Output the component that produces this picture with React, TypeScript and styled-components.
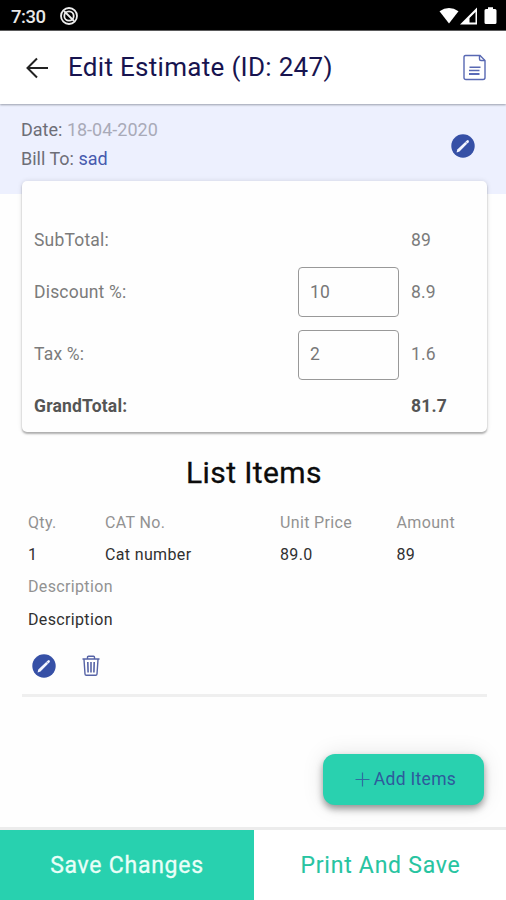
import React from "react";
import styled, { createGlobalStyle } from "styled-components";

const GlobalStyle = createGlobalStyle`
  * { box-sizing: border-box; }
  body { margin: 0; background: #fefefe; font-family: Roboto, "Liberation Sans", sans-serif; }
  button, input { font: inherit; }
`;

const Screen = styled.div`
  width: 506px;
  height: 900px;
  display: flex;
  flex-direction: column;
  overflow: hidden;
  background: #fefefe;
`;

const StatusBar = styled.div`
  height: 31px;
  flex: none;
  display: flex;
  align-items: center;
  background: #000;
  border-bottom: 1px solid #555;
  color: #e8e8e8;
  padding: 2px 8px 0 11px;
`;

const Clock = styled.span`
  width: 48px;
  padding-top: 1px;
  font-size: 18.5px;
  font-weight: 500;
  letter-spacing: -0.5px;
`;

const StatusIcons = styled.div`
  margin-left: auto;
  display: flex;
  svg { display: block; }
`;

const Header = styled.header`
  height: 73px;
  flex: none;
  display: flex;
  align-items: center;
  padding: 0 19px 0 24px;
  background: #fff;
  box-shadow: 0 1px 2px #9a9fac;
  z-index: 1;
  svg { display: block; }
`;

const Title = styled.h1`
  margin: -1px auto 0 17px;
  color: #17144f;
  font-size: 26px;
  font-weight: 400;
  line-height: 30px;
  letter-spacing: 0.3px;
`;

const Summary = styled.section`
  height: 90px;
  flex: none;
  display: flex;
  justify-content: space-between;
  background: #edf0fe;
  padding: 12px 31px 0 21px;
`;

const SummaryLine = styled.div<{ $tone?: string }>`
  height: 28.5px;
  line-height: 28.5px;
  font-size: 18px;
  color: #6d6e77;
  white-space: nowrap;
  span { color: ${(p) => p.$tone}; }
`;

const IconButton = styled.button<{ $top?: number }>`
  display: block;
  width: 24px;
  height: 24px;
  margin-top: ${(p) => p.$top ?? 0}px;
  border: 0;
  padding: 0;
  background: none;
  svg { display: block; }
`;

const TotalsCard = styled.section`
  position: relative;
  height: 251px;
  flex: none;
  margin: -13px 19px 0 22px;
  padding: 34px 12px 0;
  border-radius: 5px;
  background: #fefefe;
  box-shadow: 0 2px 2px rgba(0, 0, 0, 0.28), 0 0 5px rgba(0, 0, 0, 0.12);
`;

const TotalRow = styled.div<{ $height: number; $bold?: boolean }>`
  height: ${(p) => p.$height}px;
  display: grid;
  grid-template-columns: 264px 113px 1fr;
  align-items: center;
  color: ${(p) => (p.$bold ? "#555" : "#7b7b7b")};
  font-size: 17.5px;
  font-weight: ${(p) => (p.$bold ? 700 : 400)};
  letter-spacing: 0.2px;
  > span { margin-top: -1px; }
`;

const PercentInput = styled.input`
  width: 101px;
  height: 50px;
  border: 1.5px solid #999;
  border-radius: 4px;
  background: transparent;
  padding: 0 11px 1px;
  color: #777;
  letter-spacing: 0.2px;
  outline: none;
`;

const ListHeading = styled.h2`
  margin: 23px 0 15px;
  padding-left: 2px;
  text-align: center;
  color: #0c0c0c;
  font-size: 30px;
  line-height: 36px;
  font-weight: 400;
  letter-spacing: 0.4px;
  -webkit-text-stroke: 0.3px #0c0c0c;
`;

const Item = styled.article`
  margin: 0 19px 0 22px;
  height: 191px;
  flex: none;
  border-bottom: 3px solid #efefef;
  padding-left: 6px;
`;

const ItemGrid = styled.div`
  display: grid;
  grid-template-columns: 77px 175px 116.5px 1fr;
  grid-auto-rows: 32.4px;
  align-items: center;
`;

const Cell = styled.span<{ $label?: boolean; $wide?: boolean }>`
  grid-column: ${(p) => (p.$wide ? "1 / -1" : "auto")};
  color: ${(p) => (p.$label ? "#929292" : "#303030")};
  font-size: 16px;
  letter-spacing: 0.35px;
  white-space: nowrap;
`;

const ItemActions = styled.div`
  display: flex;
  gap: 23px;
  padding: 18px 0 0 4px;
`;

const AddRow = styled.div`
  flex: 1;
  display: flex;
  justify-content: flex-end;
  align-items: flex-start;
  padding: 57px 22px 0;
`;

const AddButton = styled.button`
  width: 161px;
  height: 51px;
  display: flex;
  align-items: center;
  justify-content: center;
  gap: 4px;
  border: 0;
  border-radius: 12px;
  background: #29d1af;
  color: #2e5a9c;
  font-size: 17.5px;
  letter-spacing: 0.3px;
  box-shadow: 0 4px 7px rgba(0, 0, 0, 0.38), 0 0 22px rgba(0, 0, 0, 0.1);
  padding: 0 0 1px 4px;
`;

const Footer = styled.footer`
  height: 73px;
  flex: none;
  display: grid;
  grid-template-columns: 254px 1fr;
  border-top: 3px solid #ececec;
`;

const FooterButton = styled.button<{ $primary?: boolean }>`
  border: 0;
  padding: 0 0 0 ${(p) => (p.$primary ? 0 : 1)}px;
  background: ${(p) => (p.$primary ? "#28d1af" : "#fff")};
  color: ${(p) => (p.$primary ? "#e9fff8" : "#27c4a1")};
  font-size: 23px;
  letter-spacing: 0.75px;
  -webkit-text-stroke: ${(p) => (p.$primary ? 0.3 : 0.1)}px currentColor;
`;

const PencilBadge = () => (
  <svg width="24" height="24" viewBox="0 0 24 24">
    <circle cx="12" cy="12" r="11.7" fill="#3650a6" />
    <path d="M5.600 18.400 6.300 15.500 15.800 6.500q1-.8 1.800 0t0 1.800L8.500 17.500Z" fill="#f3f5ff" />
    <path d="m14.300 7.700 2.100 2.100" stroke="#3650a6" strokeWidth=".5" />
  </svg>
);

const Trash = () => (
  <svg width="24" height="24" viewBox="0 0 24 24" fill="none" stroke="#5663a6" strokeWidth="1.400">
    <path d="M3.500 5h17M8.500 4.800V3.200q0-1 1-1h5q1 0 1 1v1.600M5 5.500l1 14.500q.1 1.200 1.300 1.200h9.400q1.200 0 1.300-1.200l1-14.500" />
    <path d="M8.800 8l.3 10.500M12 8v10.500M15.200 8l-.3 10.500" strokeWidth="1.600" />
  </svg>
);

const DocumentIcon = () => (
  <svg width="24" height="28" viewBox="0 0 24 28" fill="none" stroke="#5868b3" strokeWidth="1.400">
    <path d="M2.500 1.500h14.500L22 6.500v17q0 2-2 2H3q-2 0-2-2v-20Q1 1.500 2.500 1.500Z" />
    <path d="M16.500 1.500V5q0 1.500 1.500 1.500h4M6.500 13.300h11M6 16.500h10.500" />
    <path d="M6 20h10.500" stroke="#3c50aa" strokeWidth="1.700" />
  </svg>
);

export default function App() {
  return (
    <Screen>
      <GlobalStyle />
      <StatusBar>
        <Clock>7:30</Clock>
        <svg width="20" height="20" viewBox="0 0 20 20" fill="none" stroke="#eee">
          <circle cx="10" cy="10" r="8" strokeWidth="1.800" />
          <circle cx="10" cy="10" r="4.700" strokeWidth="1.800" />
          <path d="m5 5 10 10" strokeWidth="1.800" />
        </svg>
        <StatusIcons>
          <svg width="60" height="20" viewBox="0 0 60 20" fill="#fff">
            <path d="M1.500 5.200Q11 -1 20.500 5.200L11 17.500Z" />
            <path fillRule="evenodd" d="M39 1.500v17H22ZM37.500 6 31.500 12v4.500h6Z" />
            <path d="M50 1.300h5V3h2q1.500 0 1.500 1.500v12q0 1.500-1.500 1.500h-9q-1.500 0-1.500-1.500v-12Q46.500 3 48 3h2Z" />
          </svg>
        </StatusIcons>
      </StatusBar>
      <Header>
        <svg width="27" height="24" viewBox="0 0 27 24" fill="none" stroke="#222" strokeWidth="2">
          <path d="M24 12H3.500M13 2.500 3.500 12l9.500 9.500" />
        </svg>
        <Title>Edit Estimate (ID: 247)</Title>
        <DocumentIcon />
      </Header>
      <Summary>
        <div>
          <SummaryLine $tone="#a9aab8">Date: <span>18-04-2020</span></SummaryLine>
          <SummaryLine $tone="#465aae">Bill To: <span>sad</span></SummaryLine>
        </div>
        <IconButton $top={18} aria-label="Edit details"><PencilBadge /></IconButton>
      </Summary>
      <TotalsCard>
        <TotalRow $height={50}><span>SubTotal:</span><span /><span>89</span></TotalRow>
        <TotalRow $height={54}><span>Discount %:</span><PercentInput defaultValue="10" /><span>8.9</span></TotalRow>
        <TotalRow $height={71}><span>Tax %:</span><PercentInput defaultValue="2" /><span>1.6</span></TotalRow>
        <TotalRow $height={32} $bold><span>GrandTotal:</span><span /><span>81.7</span></TotalRow>
      </TotalsCard>
      <ListHeading>List Items</ListHeading>
      <Item>
        <ItemGrid>
          <Cell $label>Qty.</Cell>
          <Cell $label>CAT No.</Cell>
          <Cell $label>Unit Price</Cell>
          <Cell $label>Amount</Cell>
          <Cell>1</Cell>
          <Cell>Cat number</Cell>
          <Cell>89.0</Cell>
          <Cell>89</Cell>
          <Cell $label $wide>Description</Cell>
          <Cell $wide>Description</Cell>
        </ItemGrid>
        <ItemActions>
          <IconButton aria-label="Edit item"><PencilBadge /></IconButton>
          <IconButton aria-label="Delete item"><Trash /></IconButton>
        </ItemActions>
      </Item>
      <AddRow>
        <AddButton>
          <svg width="15" height="15" viewBox="0 0 15 15" stroke="#2e6e9f" strokeWidth="1.200">
            <path d="M7.500 .5v14M.5 7.500h14" />
          </svg>
          Add Items
        </AddButton>
      </AddRow>
      <Footer>
        <FooterButton $primary>Save Changes</FooterButton>
        <FooterButton>Print And Save</FooterButton>
      </Footer>
    </Screen>
  );
}
